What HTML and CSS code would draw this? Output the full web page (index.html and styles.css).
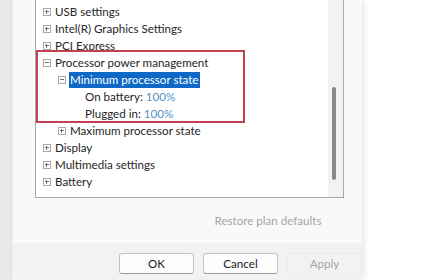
FILE: index.html
```html
<!DOCTYPE html>
<html>
<head>
<meta charset="utf-8">
<link rel="stylesheet" href="styles.css">
</head>
<body>
<div class="dialog">
  <div class="tree">
    <div class="rows">
      <div class="row l1"><span class="exp plus"></span><span class="label">USB settings</span></div>
      <div class="row l1"><span class="exp plus"></span><span class="label">Intel(R) Graphics Settings</span></div>
      <div class="row l1"><span class="exp plus"></span><span class="label">PCI Express</span></div>
      <div class="row l1"><span class="exp minus"></span><span class="label">Processor power management</span></div>
      <div class="row l2"><span class="exp minus"></span><span class="label sel">Minimum processor state</span></div>
      <div class="row l3"><span class="label">On battery: <span class="val">100%</span></span></div>
      <div class="row l3"><span class="label">Plugged in: <span class="val">100%</span></span></div>
      <div class="row l2"><span class="exp plus"></span><span class="label">Maximum processor state</span></div>
      <div class="row l1"><span class="exp plus"></span><span class="label">Display</span></div>
      <div class="row l1"><span class="exp plus"></span><span class="label">Multimedia settings</span></div>
      <div class="row l1"><span class="exp plus"></span><span class="label">Battery</span></div>
    </div>
    <div class="scroll"><div class="thumb"></div></div>
    <div class="mark"></div>
  </div>
  <div class="restore-row"><button class="btn-restore">Restore plan defaults</button></div>
  <div class="footer">
    <button class="btn">OK</button>
    <button class="btn">Cancel</button>
    <button class="btn disabled">Apply</button>
  </div>
</div>
</body>
</html>
```
FILE: styles.css
```css
html, body {
  margin: 0;
  padding: 0;
}
body {
  width: 430px;
  height: 280px;
  overflow: hidden;
  background: linear-gradient(to right, #e9e9e9 0, #e9e9e9 12px, #ffffff 12px);
  font-family: Lato, "Noto Sans", sans-serif;
  font-size: 11.6px;
  color: #262626;
}
.dialog {
  margin-left: 13px;
  width: 349px;
  height: 279px;
  background: #f9f9f9;
  box-shadow: 2px 0 6px rgba(0,0,0,0.10), -1px 0 2px rgba(0,0,0,0.06);
  display: flex;
  flex-direction: column;
}
.tree {
  position: relative;
  margin-left: 22px;
  width: 307px;
  height: 197px;
  background: #ffffff;
  border: 1px solid #a9a9a9;
  border-top: none;
  display: flex;
}
.rows {
  flex: 1;
  padding-top: 3px;
}
.row {
  height: 17px;
  display: flex;
  align-items: center;
  white-space: nowrap;
}
.l1 { padding-left: 7px; }
.l2 { padding-left: 22px; }
.l3 { padding-left: 48px; }
.exp {
  position: relative;
  width: 6px;
  height: 6px;
  border: 1px solid #a8a8a8;
  margin-right: 3px;
  flex: none;
}
.exp::before {
  content: "";
  position: absolute;
  left: 1px;
  top: 2px;
  width: 4px;
  height: 1px;
  background: #707070;
}
.plus::after {
  content: "";
  position: absolute;
  left: 2px;
  top: 1px;
  width: 1px;
  height: 4px;
  background: #707070;
}
.label {
  padding: 0 1px;
  line-height: 16px;
}
.sel {
  background: #0e68c6;
  color: #ffffff;
}
.val {
  color: #5292c6;
}
.scroll {
  width: 15px;
  background: #f2f2f2;
  position: relative;
}
.thumb {
  position: absolute;
  left: 4px;
  top: 87px;
  width: 4px;
  height: 93px;
  background: #8a8a8a;
  border-radius: 2px;
}
.mark {
  position: absolute;
  left: 0px;
  top: 50px;
  width: 205px;
  height: 69px;
  border: 2px solid #c2404f;
}
.restore-row {
  height: 45px;
  display: flex;
  align-items: center;
  padding-left: 192px;
}
.btn-restore {
  font: inherit;
  background: transparent;
  border: none;
  color: #a6a6a6;
  width: 126px;
  height: 24px;
  padding: 0;
}
.footer {
  flex: 1;
  background: #f2f2f2;
  display: flex;
  gap: 8px;
  padding-left: 106px;
  padding-top: 10px;
}
.btn {
  font: inherit;
  width: 75px;
  height: 21px;
  background: #fdfdfd;
  border: 1px solid #c4c4c4;
  border-bottom-color: #9a9a9a;
  border-radius: 3px;
  color: #1a1a1a;
  padding: 0;
}
.btn + .btn { margin-left: 1px; }
.btn.disabled {
  background: transparent;
  border-color: #ebebeb;
  color: #a6a6a6;
}
```
